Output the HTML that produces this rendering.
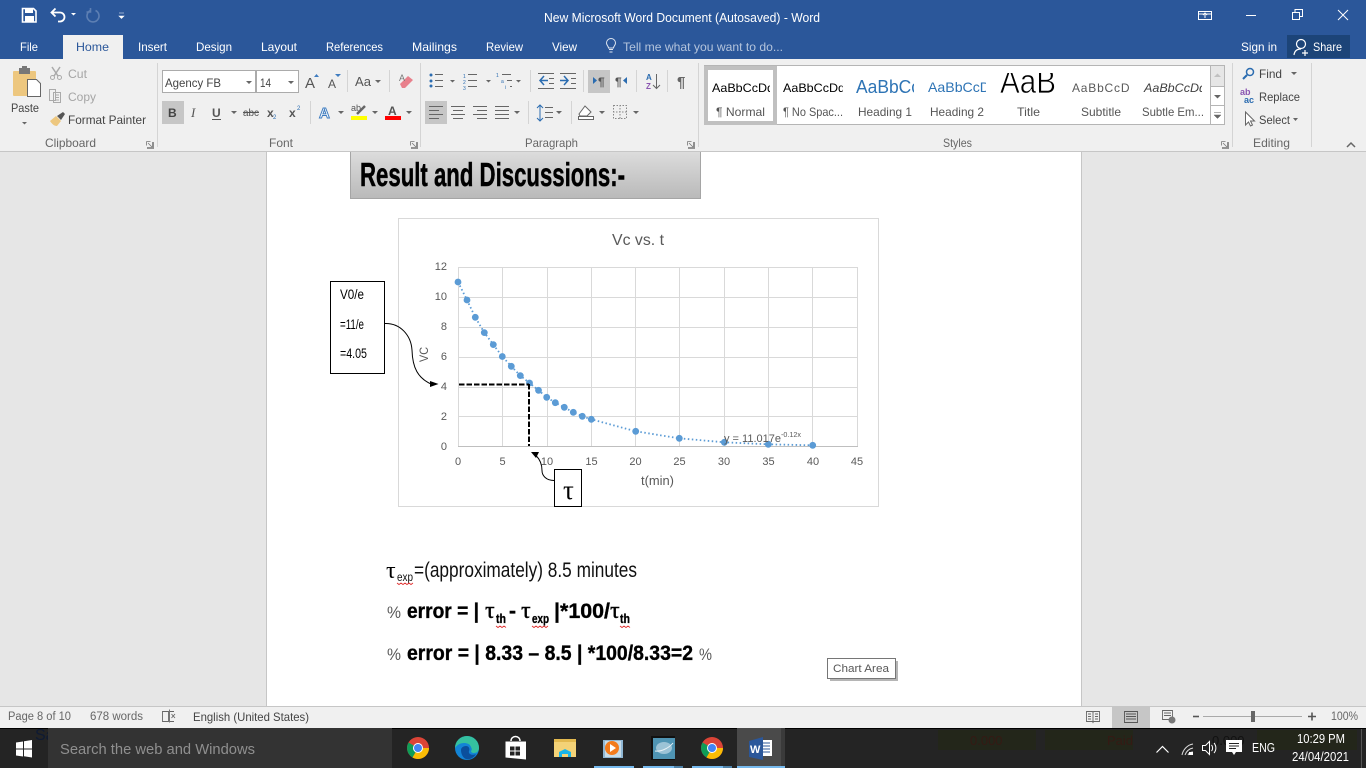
<!DOCTYPE html>
<html><head><meta charset="utf-8"><title>New Microsoft Word Document (Autosaved) - Word</title>
<style>
html,body{margin:0;padding:0;width:1366px;height:768px;overflow:hidden;background:#e6e6e6}
svg{display:block;position:absolute;left:0;top:0}
text{font-family:"Liberation Sans",sans-serif;white-space:pre}
.t{font-size:12px;fill:#fff}
.r{font-size:12px;fill:#444}
.g{font-size:12px;fill:#666}
.s{font-size:11.5px;fill:#666}
.ax{font-size:11px;fill:#595959}
.n{font-family:"Liberation Sans Narrow","Liberation Sans",sans-serif}
.b{font-family:"Liberation Sans Narrow","Liberation Sans",sans-serif;font-weight:bold;fill:#000;stroke:#000;stroke-width:.35}
.tau{font-family:"Liberation Serif",serif;font-size:24px;fill:#000}
.ic{fill:none;stroke:#666;stroke-width:1}
</style></head><body>
<svg width="1366" height="768" viewBox="0 0 1366 768" xmlns="http://www.w3.org/2000/svg">
<defs>
<linearGradient id="hg" x1="0" y1="0" x2="0" y2="1"><stop offset="0" stop-color="#dcdcdc"/><stop offset="1" stop-color="#b9b9b9"/></linearGradient>
<clipPath id="c1"><rect x="712" y="70" width="58" height="32"/></clipPath>
<clipPath id="c2"><rect x="783" y="70" width="60" height="32"/></clipPath>
<clipPath id="c3"><rect x="855" y="70" width="59" height="32"/></clipPath>
<clipPath id="c4"><rect x="927" y="70" width="59" height="32"/></clipPath>
<clipPath id="c5"><rect x="998" y="73" width="60" height="30"/></clipPath>
<clipPath id="c6"><rect x="1071" y="70" width="59" height="32"/></clipPath>
<clipPath id="c7"><rect x="1143" y="70" width="59" height="32"/></clipPath>
</defs>

<!-- document area -->
<rect x="0" y="152" width="1366" height="556" fill="#e6e6e6"/>
<rect x="266.500" y="150" width="815" height="560" fill="#fff" stroke="#c6c6c6"/>

<!-- title bar -->
<rect width="1366" height="59" fill="#2b579a"/>
<path d="M22.500 8.500h11l2.500 2.500v11h-13.500z" fill="none" stroke="#fff" stroke-width="1.600"/>
<rect x="25" y="8" width="8" height="5" fill="#fff"/><rect x="25" y="16" width="9" height="6" fill="#fff"/>
<path d="M52 12.500h8a4.500 4.500 0 0 1 0 9h-2M55.500 8.500l-4 4 4 4" fill="none" stroke="#fff" stroke-width="1.800"/>
<path d="M71 13h5l-2.500 2.500z" fill="#fff"/>
<path d="M90.500 10.500a6 6 0 1 0 5 0M90.500 8v4h-4" fill="none" stroke="#5d7fb3" stroke-width="1.600"/>
<path d="M119 13h5M119 16h5l-2.500 2.500z" fill="#fff" stroke="#fff" stroke-width=".6"/>
<text class="t" x="544" y="22" textLength="276" lengthAdjust="spacingAndGlyphs" style="font-size:12.500px">New Microsoft Word Document (Autosaved) - Word</text>
<path d="M1198.500 11.500h13v8h-13zM1198.500 14h13M1205 18v-5M1203 15l2-2 2 2" fill="none" stroke="#fff"/>
<path d="M1246 15.500h10" stroke="#fff" fill="none"/>
<path d="M1292.500 12.500h7v7h-7zM1295 12v-2.500h7.500v7h-3" stroke="#fff" fill="none"/>
<path d="M1338 10l10 10M1348 10l-10 10" stroke="#fff" fill="none"/>

<!-- tabs -->
<rect x="63" y="35" width="60" height="24" fill="#f0f0f0"/>
<text class="t" x="20" y="51" textLength="18" lengthAdjust="spacingAndGlyphs">File</text>
<text class="t" x="76" y="51" textLength="33" lengthAdjust="spacingAndGlyphs" style="fill:#2b579a">Home</text>
<text class="t" x="138" y="51" textLength="29" lengthAdjust="spacingAndGlyphs">Insert</text>
<text class="t" x="196" y="51" textLength="36" lengthAdjust="spacingAndGlyphs">Design</text>
<text class="t" x="261" y="51" textLength="36" lengthAdjust="spacingAndGlyphs">Layout</text>
<text class="t" x="326" y="51" textLength="57" lengthAdjust="spacingAndGlyphs">References</text>
<text class="t" x="412" y="51" textLength="45" lengthAdjust="spacingAndGlyphs">Mailings</text>
<text class="t" x="486" y="51" textLength="37" lengthAdjust="spacingAndGlyphs">Review</text>
<text class="t" x="552" y="51" textLength="25" lengthAdjust="spacingAndGlyphs">View</text>
<path d="M609 49.500h4M609.500 52h3M608.500 48c0-2-2-2.500-2-5a4.500 4.500 0 0 1 9 0c0 2.500-2 3-2 5z" fill="none" stroke="#dfe6f0"/>
<text class="t" x="623" y="51" textLength="160" lengthAdjust="spacingAndGlyphs" style="fill:#b4c4dc">Tell me what you want to do...</text>
<text class="t" x="1241" y="51" textLength="36" lengthAdjust="spacingAndGlyphs">Sign in</text>
<rect x="1287" y="35" width="63" height="23" fill="#1c4478"/>
<circle cx="1301" cy="44" r="4.500" fill="none" stroke="#fff" stroke-width="1.200"/>
<path d="M1294 55c.5-4 3-6 7-6M1302 53h6M1305 50v6" fill="none" stroke="#fff" stroke-width="1.200"/>
<text class="t" x="1313" y="51" textLength="29" lengthAdjust="spacingAndGlyphs">Share</text>

<!-- ribbon -->
<rect y="59" width="1366" height="92" fill="#f0f0f0"/>
<rect y="151" width="1366" height="1" fill="#c6c6c6"/>
<path d="M157.500 63v84M420.500 63v84M698.500 63v84M1232.500 63v84M1311.500 63v84" stroke="#d4d4d4" fill="none"/>

<!-- clipboard -->
<rect x="13" y="71" width="23" height="25" rx="1" fill="#edc77f"/>
<rect x="19" y="68" width="11" height="6" fill="#777"/><rect x="22" y="66" width="5" height="4" fill="#777"/>
<path d="M27.500 79.500h9l4 4v13h-13z" fill="#fff" stroke="#666"/>
<text class="r" x="11" y="112" textLength="28" lengthAdjust="spacingAndGlyphs">Paste</text>
<path d="M22 122h5l-2.500 2.500z" fill="#666"/>
<path d="M52 67l6 9M60 67l-6 9" stroke="#aaa" stroke-width="1.500" fill="none"/><circle cx="52.500" cy="77.500" r="2" fill="none" stroke="#aaa"/><circle cx="59.500" cy="77.500" r="2" fill="none" stroke="#aaa"/>
<text class="r" x="68" y="78" textLength="19" lengthAdjust="spacingAndGlyphs" style="fill:#a5a5a5">Cut</text>
<path d="M49.500 89.500h6v11h-6zM53.500 92.500h7v10h-7zM55 95h4M55 97.500h4M55 100h4" fill="#f0f0f0" stroke="#aaa"/>
<text class="r" x="68" y="101" textLength="28" lengthAdjust="spacingAndGlyphs" style="fill:#a5a5a5">Copy</text>
<path d="M50 121l6-5 5 5-4 5c-3 0-5-2-7-5z" fill="#edc77f"/><path d="M57 116l6-4 2 2-4 6z" fill="#555"/>
<text class="r" x="68" y="124" textLength="78" lengthAdjust="spacingAndGlyphs">Format Painter</text>
<text class="g" x="45" y="147" textLength="51" lengthAdjust="spacingAndGlyphs">Clipboard</text>
<path d="M146.500 141.500h4M146.500 141.500v4M153.500 148.500h-6v-1h5v-5h1zM148 143l4 4" stroke="#777" fill="none" stroke-width=".8"/>

<!-- font -->
<rect x="162.500" y="70.500" width="93" height="22" fill="#fff" stroke="#ababab"/>
<rect x="256.500" y="70.500" width="42" height="22" fill="#fff" stroke="#ababab"/>
<text class="r" x="165" y="87" textLength="56" lengthAdjust="spacingAndGlyphs">Agency FB</text>
<text class="r" x="260" y="87" textLength="11" lengthAdjust="spacingAndGlyphs">14</text>
<path d="M246 81h6l-3 3zM288 81h6l-3 3z" fill="#666"/>
<text x="305" y="88" style="font-size:15px;fill:#555">A</text><path d="M314 77h5l-2.500-3z" fill="#3e7cc0"/>
<text x="328" y="88" style="font-size:12px;fill:#555">A</text><path d="M335 74h6l-3 3z" fill="#3e7cc0"/>
<path d="M347.500 70v22M389.500 70v22" stroke="#d4d4d4"/>
<text x="355" y="86" style="font-size:13px;fill:#555" textLength="16" lengthAdjust="spacingAndGlyphs">Aa</text>
<path d="M375 80h6l-3 3z" fill="#666"/>
<path d="M400 84l8-8 5 4-8 8h-3z" fill="#e8808c"/><text x="399" y="81" style="font-size:9px;fill:#777">A</text>
<rect x="162" y="101" width="22" height="23" fill="#c6c6c6"/>
<text x="168" y="117" style="font-size:12px;font-weight:bold;fill:#444">B</text>
<text x="191" y="117" style="font-family:'Liberation Serif',serif;font-size:13px;font-style:italic;fill:#555">I</text>
<text x="212" y="117" style="font-size:12px;font-weight:bold;fill:#555">U</text><path d="M212 119.500h9" stroke="#555"/>
<path d="M231 111h6l-3 3z" fill="#666"/>
<text x="243" y="116" style="font-size:10px;fill:#555" textLength="16" lengthAdjust="spacingAndGlyphs">abc</text><path d="M243 112.500h16" stroke="#555"/>
<text x="267" y="117" style="font-size:12px;font-weight:bold;fill:#555">x</text><text x="273" y="119" style="font-size:6px;fill:#2b6cb0">2</text>
<text x="289" y="117" style="font-size:12px;font-weight:bold;fill:#555">x</text><text x="297" y="110" style="font-size:6px;fill:#2b6cb0">2</text>
<path d="M310.500 101v23" stroke="#d4d4d4"/>
<text x="319" y="118" style="font-size:15px;font-weight:bold;fill:#fff;stroke:#3e7cc0;stroke-width:1">A</text>
<path d="M338 111h6l-3 3z" fill="#666"/>
<text x="351" y="111" style="font-size:9px;fill:#555">ab</text><path d="M357 114l8-8" stroke="#666" stroke-width="2.500"/>
<rect x="351" y="116" width="16" height="4" fill="#ff0"/>
<path d="M372 111h6l-3 3z" fill="#666"/>
<text x="388" y="115" style="font-size:12px;font-weight:bold;fill:#555">A</text>
<rect x="385" y="116" width="16" height="4" fill="#f00"/>
<path d="M406 111h6l-3 3z" fill="#666"/>
<text class="g" x="269" y="147" textLength="24" lengthAdjust="spacingAndGlyphs">Font</text>
<path d="M410.500 141.500h4M410.500 141.500v4M417.500 148.500h-6v-1h5v-5h1zM412 143l4 4" stroke="#777" fill="none" stroke-width=".8"/>

<!-- paragraph -->
<g fill="#2b6cb0"><circle cx="431" cy="75" r="1.500"/><circle cx="431" cy="81" r="1.500"/><circle cx="431" cy="86" r="1.500"/></g>
<path d="M435 74.500h8M435 80.500h8M435 86.500h8" stroke="#666" fill="none"/>
<path d="M450 80h5l-2.500 2.500zM486 80h5l-2.500 2.500zM516 80h5l-2.500 2.500z" fill="#666"/>
<text x="463" y="78" style="font-size:5px;fill:#2b6cb0">1</text><text x="463" y="84" style="font-size:5px;fill:#2b6cb0">2</text><text x="463" y="90" style="font-size:5px;fill:#2b6cb0">3</text>
<path d="M468 74.500h9M468 80.500h9M468 86.500h9" stroke="#666" fill="none"/>
<text x="496" y="77" style="font-size:5px;fill:#2b6cb0">1</text><text x="501" y="83" style="font-size:5px;fill:#2b6cb0">a</text><text x="505" y="89" style="font-size:5px;fill:#2b6cb0">i</text>
<path d="M502 74.500h9M507 80.500h5M510 86.500h2" stroke="#666" fill="none"/>
<path d="M530.500 70v22M583.500 70v22M636.500 70v22M667.500 70v22M528.500 101v23M571.500 101v23" stroke="#d4d4d4"/>
<path d="M540 80.500h8M544 76l-4 4.500 4 4.500" stroke="#2b6cb0" fill="none" stroke-width="1.500"/>
<path d="M538 73.500h16M549 78.500h5M549 83.500h5M538 88.500h16" stroke="#666" fill="none"/>
<path d="M560 80.500h8M564 76l4 4.500-4 4.500" stroke="#2b6cb0" fill="none" stroke-width="1.500"/>
<path d="M560 73.500h16M571 78.500h5M571 83.500h5M560 88.500h16" stroke="#666" fill="none"/>
<rect x="588" y="70" width="22" height="23" fill="#c6c6c6"/>
<path d="M593 77v7l4-3.500z" fill="#2b6cb0"/><text x="598" y="86" style="font-size:12px;font-weight:bold;fill:#555">¶</text>
<text x="615" y="86" style="font-size:12px;font-weight:bold;fill:#555">¶</text><path d="M627 77v7l-4-3.500z" fill="#2b6cb0"/>
<text x="646" y="80" style="font-size:8px;font-weight:bold;fill:#2b6cb0">A</text><text x="646" y="89" style="font-size:8px;font-weight:bold;fill:#8a55b0">Z</text>
<path d="M656.500 74v14M653 85l3.500 3.500 3.500-3.500" stroke="#666" fill="none"/>
<text x="677" y="87" style="font-size:15px;font-weight:bold;fill:#666">¶</text>
<rect x="425" y="101" width="22" height="23" fill="#c6c6c6"/>
<path d="M429 106.500h14M429 110.500h10M429 114.500h14M429 118.500h10" stroke="#666" fill="none"/>
<path d="M451 106.500h14M453 110.500h10M451 114.500h14M453 118.500h10" stroke="#666" fill="none"/>
<path d="M473 106.500h14M477 110.500h10M473 114.500h14M477 118.500h10" stroke="#666" fill="none"/>
<path d="M495 106.500h14M495 110.500h14M495 114.500h14M495 118.500h14" stroke="#666" fill="none"/>
<path d="M514 111h6l-3 3z" fill="#666"/>
<path d="M540 105v16M537 108l3-3 3 3M537 118l3 3 3-3" stroke="#2b6cb0" fill="none"/>
<path d="M545 107.500h8M545 112.500h8M545 117.500h8" stroke="#666" fill="none"/>
<path d="M556 111h6l-3 3z" fill="#666"/>
<path d="M579 114l6-8 6 6-4 4h-7zM578.500 116.500h15v3h-15z" fill="#fff" stroke="#666"/>
<path d="M599 111h6l-3 3z" fill="#666"/>
<path d="M613.500 105.500h13v13h-13zM620 105v14M613 112h14" stroke="#888" fill="none" stroke-dasharray="1.500 1.500"/>
<path d="M633 111h6l-3 3z" fill="#666"/>
<text class="g" x="525" y="147" textLength="53" lengthAdjust="spacingAndGlyphs">Paragraph</text>
<path d="M687.500 141.500h4M687.500 141.500v4M694.500 148.500h-6v-1h5v-5h1zM689 143l4 4" stroke="#777" fill="none" stroke-width=".8"/>

<!-- styles -->
<rect x="704.500" y="65.500" width="520" height="59" fill="#fff" stroke="#b5b5b5"/>
<rect x="706" y="68" width="69" height="55" fill="#fff" stroke="#c0c0c0" stroke-width="4"/>
<path d="M1210.500 65.500v59M1210.500 86.500h14M1210.500 105.500h14" stroke="#b5b5b5" fill="none"/>
<rect x="1211" y="66" width="13" height="20" fill="#e6e6e6"/>
<path d="M1214 77h7l-3.500-3.500z" fill="#c0c0c0"/>
<path d="M1214 95h7l-3.500 3.500z" fill="#666"/>
<path d="M1214 112.500h7M1214 115h7l-3.500 3.500z" fill="#666" stroke="#666" stroke-width=".5"/>
<g clip-path="url(#c1)"><text x="712" y="92" style="font-size:12px;fill:#000" textLength="62" lengthAdjust="spacingAndGlyphs">AaBbCcDd</text></g>
<g clip-path="url(#c2)"><text x="783" y="92" style="font-size:12px;fill:#000" textLength="62" lengthAdjust="spacingAndGlyphs">AaBbCcDd</text></g>
<g clip-path="url(#c3)"><text x="856" y="93" style="font-size:18px;fill:#2e74b5" textLength="64" lengthAdjust="spacingAndGlyphs">AaBbCc</text></g>
<g clip-path="url(#c4)"><text x="928" y="92" style="font-size:14px;fill:#2e74b5" textLength="62" lengthAdjust="spacingAndGlyphs">AaBbCcD</text></g>
<g clip-path="url(#c5)"><text x="1000" y="93" style="font-size:34px;fill:#000;stroke:#fff;stroke-width:.7" textLength="56" lengthAdjust="spacingAndGlyphs">AaB</text></g>
<g clip-path="url(#c6)"><text x="1072" y="92" style="font-size:12px;fill:#5a5a5a;letter-spacing:.8px">AaBbCcD</text></g>
<g clip-path="url(#c7)"><text x="1144" y="92" style="font-size:12px;font-style:italic;fill:#404040" textLength="62" lengthAdjust="spacingAndGlyphs">AaBbCcDd</text></g>
<g class="r" style="font-size:12px;fill:#555">
<text x="716" y="116" textLength="49" lengthAdjust="spacingAndGlyphs">¶ Normal</text>
<text x="783" y="116" textLength="60" lengthAdjust="spacingAndGlyphs">¶ No Spac...</text>
<text x="858" y="116" textLength="54" lengthAdjust="spacingAndGlyphs">Heading 1</text>
<text x="930" y="116" textLength="54" lengthAdjust="spacingAndGlyphs">Heading 2</text>
<text x="1017" y="116" textLength="23" lengthAdjust="spacingAndGlyphs">Title</text>
<text x="1081" y="116" textLength="40" lengthAdjust="spacingAndGlyphs">Subtitle</text>
<text x="1142" y="116" textLength="62" lengthAdjust="spacingAndGlyphs">Subtle Em...</text>
</g>
<text class="g" x="943" y="147" textLength="29" lengthAdjust="spacingAndGlyphs">Styles</text>
<path d="M1221.500 141.500h4M1221.500 141.500v4M1228.500 148.500h-6v-1h5v-5h1zM1223 143l4 4" stroke="#777" fill="none" stroke-width=".8"/>

<!-- editing -->
<circle cx="1250" cy="72" r="3.500" fill="none" stroke="#2b6cb0" stroke-width="1.500"/><path d="M1247 75l-4 4" stroke="#2b6cb0" stroke-width="2"/>
<text class="r" x="1259" y="78" textLength="23" lengthAdjust="spacingAndGlyphs">Find</text>
<path d="M1291 72h6l-3 3z" fill="#666"/>
<text x="1240" y="95" style="font-size:9px;font-weight:bold;fill:#8a55b0">ab</text>
<text x="1244" y="103" style="font-size:9px;font-weight:bold;fill:#2b6cb0">ac</text>
<text class="r" x="1259" y="101" textLength="41" lengthAdjust="spacingAndGlyphs">Replace</text>
<path d="M1245.500 112v13l3-3 2 4 2-1-2-4h4z" fill="#fff" stroke="#666"/>
<text class="r" x="1259" y="124" textLength="31" lengthAdjust="spacingAndGlyphs">Select</text>
<path d="M1293 118h5l-2.500 3z" fill="#666"/>
<text class="g" x="1253" y="147" textLength="37" lengthAdjust="spacingAndGlyphs">Editing</text>
<path d="M1347 147l4-4 4 4" stroke="#666" fill="none" stroke-width="1.500"/>

<!-- heading -->
<rect x="350" y="152" width="351" height="47" fill="url(#hg)"/>
<path d="M350.500 152v46.500h350V152" fill="none" stroke="#a5a5a5"/>
<text class="b" x="360" y="186" style="font-size:33px;stroke-width:.5" textLength="265" lengthAdjust="spacingAndGlyphs">Result and Discussions:-</text>

<!-- chart -->
<rect x="398.500" y="218.500" width="480" height="288" fill="#fff" stroke="#d9d9d9"/>
<path d="M458.500 267v179M502.500 267v179M547.500 267v179M591.500 267v179M635.500 267v179M679.500 267v179M724.500 267v179M768.500 267v179M812.500 267v179M857.500 267v179M458 267.500h400M458 297.500h400M458 327.500h400M458 357.500h400M458 387.500h400M458 416.500h400" stroke="#d9d9d9" fill="none"/>
<path d="M458 446.500h400" stroke="#bfbfbf" fill="none"/>
<text x="612" y="245" style="font-size:16px;fill:#595959" textLength="52" lengthAdjust="spacingAndGlyphs">Vc vs. t</text>
<g class="ax" text-anchor="end">
<text x="447" y="270">12</text><text x="447" y="300">10</text><text x="447" y="330">8</text><text x="447" y="360">6</text><text x="447" y="390">4</text><text x="447" y="420">2</text><text x="447" y="450">0</text>
</g>
<g class="ax" text-anchor="middle">
<text x="458" y="465">0</text><text x="502.500" y="465">5</text><text x="547" y="465">10</text><text x="591.500" y="465">15</text><text x="635.500" y="465">20</text><text x="679.500" y="465">25</text><text x="724" y="465">30</text><text x="768.500" y="465">35</text><text x="813" y="465">40</text><text x="857" y="465">45</text>
</g>
<text class="ax" x="641" y="485" textLength="33" lengthAdjust="spacingAndGlyphs" style="font-size:12.500px">t(min)</text>
<text class="ax" transform="translate(428 362) rotate(-90)" textLength="15" lengthAdjust="spacingAndGlyphs" style="font-size:12px">VC</text>
<polyline fill="none" stroke="#5b9bd5" stroke-width="1.800" stroke-dasharray="1.500 2.500" points="458,282 467,300 475.300,317.300 484.300,332.600 493.300,344.600 502.300,356.500 511.300,366.300 520.300,375.600 529.500,383 538.500,390.300 546.700,397.300 555.300,402.700 564.300,407.300 573.300,412.300 582.300,416.300 591.300,419.300 635.700,431.300 679.300,438.300 724.300,442.300 768.300,444.300 812.700,445.300"/>
<g fill="#5b9bd5">
<circle cx="458" cy="282" r="3.400"/><circle cx="467" cy="300" r="3.400"/><circle cx="475.300" cy="317.300" r="3.400"/><circle cx="484.300" cy="332.600" r="3.400"/><circle cx="493.300" cy="344.600" r="3.400"/><circle cx="502.300" cy="356.500" r="3.400"/><circle cx="511.300" cy="366.300" r="3.400"/><circle cx="520.300" cy="375.600" r="3.400"/><circle cx="529.500" cy="383" r="3.400"/><circle cx="538.500" cy="390.300" r="3.400"/><circle cx="546.700" cy="397.300" r="3.400"/><circle cx="555.300" cy="402.700" r="3.400"/><circle cx="564.300" cy="407.300" r="3.400"/><circle cx="573.300" cy="412.300" r="3.400"/><circle cx="582.300" cy="416.300" r="3.400"/><circle cx="591.300" cy="419.300" r="3.400"/><circle cx="635.700" cy="431.300" r="3.400"/><circle cx="679.300" cy="438.300" r="3.400"/><circle cx="724.300" cy="442.300" r="3.400"/><circle cx="768.300" cy="444.300" r="3.400"/><circle cx="812.700" cy="445.300" r="3.400"/>
</g>
<text x="724" y="442" style="font-size:11px;fill:#595959" textLength="57" lengthAdjust="spacingAndGlyphs">y = 11.017e</text>
<text x="781" y="437" style="font-size:7px;fill:#595959" textLength="20" lengthAdjust="spacingAndGlyphs">-0.12x</text>
<path d="M459 384.500h70" stroke="#000" stroke-width="2" stroke-dasharray="5.500 2" fill="none"/>
<path d="M529 384v62" stroke="#000" stroke-width="2" stroke-dasharray="5.500 2" fill="none"/>
<path d="M385 323.500C400 323 411 335 412 350C412.500 368 418 378 431 384" stroke="#000" fill="none"/>
<path d="M430 381l8.500 3-8.500 3z" fill="#000"/>
<path d="M554 480.500c-8 0-12-5-12-10c0-6-2-11-6-15" stroke="#000" fill="none"/>
<path d="M531 452h8l-3 6z" fill="#000"/>
<rect x="330.500" y="281.500" width="54" height="92" fill="#fff" stroke="#000"/>
<text class="n" x="340" y="299" style="font-size:14px;fill:#000" textLength="24" lengthAdjust="spacingAndGlyphs">V0/e</text>
<text class="n" x="340" y="329" style="font-size:14px;fill:#000" textLength="24" lengthAdjust="spacingAndGlyphs">=11/e</text>
<text class="n" x="340" y="358" style="font-size:14px;fill:#000" textLength="27" lengthAdjust="spacingAndGlyphs">=4.05</text>
<rect x="554.500" y="469.500" width="27" height="37" fill="#fff" stroke="#000"/>
<text x="563" y="499" style="font-family:'Liberation Serif',serif;font-size:27px;fill:#000">τ</text>

<!-- body text -->
<text class="tau" x="386" y="578">τ</text>
<text class="n" x="397" y="581" style="font-size:12px;fill:#111" textLength="16" lengthAdjust="spacingAndGlyphs">exp</text>
<text class="n" x="414" y="577" style="font-size:21px;fill:#111" textLength="223" lengthAdjust="spacingAndGlyphs">=(approximately) 8.5 minutes</text>
<path d="M397 583l2 1.500 2-1.500 2 1.500 2-1.500 2 1.500 2-1.500 2 1.500 2-1.500" stroke="#e03030" fill="none" stroke-width=".9"/>

<text x="387" y="618" style="font-size:17px;fill:#595959" textLength="14" lengthAdjust="spacingAndGlyphs">%</text>
<text class="b" x="407" y="618" style="font-size:21px" textLength="72" lengthAdjust="spacingAndGlyphs">error = |</text>
<text class="tau" x="485" y="618" style="stroke:#000;stroke-width:.4">τ</text>
<text class="b" x="496" y="623" style="font-size:13px" textLength="10" lengthAdjust="spacingAndGlyphs">th</text>
<text class="b" x="509" y="618" style="font-size:21px">-</text>
<text class="tau" x="521" y="618" style="stroke:#000;stroke-width:.4">τ</text>
<text class="b" x="532" y="623" style="font-size:13px" textLength="17" lengthAdjust="spacingAndGlyphs">exp</text>
<text class="b" x="554" y="618" style="font-size:21px" textLength="56" lengthAdjust="spacingAndGlyphs">|*100/</text>
<text class="tau" x="610" y="618" style="stroke:#000;stroke-width:.4">τ</text>
<text class="b" x="620" y="623" style="font-size:13px" textLength="10" lengthAdjust="spacingAndGlyphs">th</text>
<path d="M496 626l2 1.500 2-1.500 2 1.500 2-1.500 2 1.500M532 626l2 1.500 2-1.500 2 1.500 2-1.500 2 1.500 2-1.500 2 1.500 2-1.500M620 626l2 1.500 2-1.500 2 1.500 2-1.500 2 1.500" stroke="#e03030" fill="none" stroke-width=".9"/>

<text x="387" y="660" style="font-size:17px;fill:#595959" textLength="14" lengthAdjust="spacingAndGlyphs">%</text>
<text class="b" x="407" y="660" style="font-size:21px" textLength="286" lengthAdjust="spacingAndGlyphs">error = | 8.33 – 8.5 | *100/8.33=2</text>
<text x="699" y="660" style="font-size:17px;fill:#595959" textLength="13" lengthAdjust="spacingAndGlyphs">%</text>

<!-- tooltip -->
<rect x="830" y="661" width="68" height="20" fill="#b5b5b5"/>
<rect x="827.500" y="658.500" width="68" height="20" fill="#fff" stroke="#767676"/>
<text x="833" y="672" style="font-size:11px;fill:#575757" textLength="56" lengthAdjust="spacingAndGlyphs">Chart Area</text>

<!-- status bar -->
<rect y="707" width="1366" height="21" fill="#f0f0f0"/>
<rect y="706" width="1366" height="1" fill="#c6c6c6"/>
<text class="s" x="8" y="720" textLength="63" lengthAdjust="spacingAndGlyphs">Page 8 of 10</text>
<text class="s" x="90" y="720" textLength="53" lengthAdjust="spacingAndGlyphs">678 words</text>
<path d="M162.500 711.500h6v10h-6zM169.500 709.500v13M170 711.500h4M170 721.500h4M171.500 714l3.500 4M175 714l-3.500 4" stroke="#666" fill="none" stroke-width=".9"/>
<text class="s" x="193" y="721" textLength="116" lengthAdjust="spacingAndGlyphs" style="font-size:12px;fill:#444">English (United States)</text>
<path d="M1086.500 711.500h6l.5 1 .5-1h6v10h-6l-.5 1-.5-1h-6zM1093 712v10M1088 714h3M1088 716.500h3M1088 719h3M1095 714h3M1095 716.500h3M1095 719h3" stroke="#666" fill="none" stroke-width=".9"/>
<rect x="1112" y="707" width="38" height="21" fill="#c6c6c6"/>
<path d="M1124.500 711.500h13v11h-13zM1126 714h10M1126 716.500h10M1126 719h10" stroke="#555" fill="none" stroke-width=".9"/>
<path d="M1162.500 710.500h10v9h-10zM1164 713h7M1164 715.500h7" stroke="#666" fill="none" stroke-width=".9"/>
<circle cx="1172" cy="720" r="3.500" fill="#777"/>
<path d="M1193 716.500h6" stroke="#555" stroke-width="1.600"/>
<path d="M1203 716.500h99" stroke="#aaa"/>
<rect x="1251" y="711" width="4" height="11" fill="#666"/>
<path d="M1308 716.500h8M1312 712.500v8" stroke="#555" stroke-width="1.600"/>
<text class="s" x="1331" y="720" textLength="27" lengthAdjust="spacingAndGlyphs">100%</text>

<!-- taskbar -->
<rect y="728" width="1366" height="40" fill="#242424"/>
<rect y="728" width="1366" height="1" fill="#000"/>
<text x="35" y="740" style="font-size:16px;fill:#0e1a33">Sa</text>
<rect x="938" y="730" width="98" height="20" fill="#23261a"/>
<rect x="1045" y="730" width="88" height="20" fill="#23261a"/>
<rect x="1257" y="730" width="100" height="20" fill="#23261a"/>
<text x="970" y="745" style="font-size:13px;fill:#351a14">0.000</text>
<text x="1107" y="745" style="font-size:13px;fill:#351a14">Paid</text>
<text x="1212" y="745" style="font-size:13px;fill:#111">0.000</text>
<path d="M16 742.500l7-1v7h-7zM24 741.300l8-1.300v8.500h-8zM16 749.500h7v7l-7-1zM24 749.500h8v8l-8-1.200z" fill="#fff"/>
<rect x="48" y="728" width="344" height="40" fill="#333"/>
<text x="60" y="754" style="font-size:15px;fill:#8f8f8f" textLength="195" lengthAdjust="spacingAndGlyphs">Search the web and Windows</text>

<g id="chrome1">
<circle cx="418" cy="748" r="11" fill="#db4437"/>
<path d="M418 748l-5.500 9.500a11 11 0 0 1-4-15z" fill="#0f9d58"/>
<path d="M418 748h11a11 11 0 0 1-16.500 9.500z" fill="#fbbc05"/>
<circle cx="418" cy="748" r="5" fill="#fff"/><circle cx="418" cy="748" r="4" fill="#4285f4"/>
</g>
<g>
<circle cx="712" cy="748" r="11" fill="#db4437"/>
<path d="M712 748l-5.500 9.500a11 11 0 0 1-4-15z" fill="#0f9d58"/>
<path d="M712 748h11a11 11 0 0 1-16.500 9.500z" fill="#fbbc05"/>
<circle cx="712" cy="748" r="5" fill="#fff"/><circle cx="712" cy="748" r="4" fill="#4285f4"/>
</g>
<!-- edge -->
<circle cx="467" cy="748" r="12" fill="#1384d6"/>
<path d="M455 748a12 12 0 0 1 24 0c0 3-2 5-5 5c-2 0-3-1-3-2c1-1 1-2 0-4c-1-3-4-4-7-4c-4 0-7 2-9 5z" fill="#35c1a0"/>
<path d="M461 750c0-2 2-4 5-4c3 0 4 3 3 5c-1 3 3 5 7 3c-2 4-7 6-10 5c-3-1-5-5-5-9z" fill="#0b4f9c"/>
<!-- store -->
<path d="M505.500 741.500h20.500l0 18-20.500-2z" fill="#fff"/>
<path d="M511 741c0-6 9-6 9 0" fill="none" stroke="#fff" stroke-width="1.500"/>
<path d="M510 746.500h4.500v4h-4.500zM515.500 746.500h4.500v4h-4.500zM510 751.500h4.500v4h-4.500zM515.500 751.500h4.500v4h-4.500z" fill="#222"/>
<!-- explorer -->
<path d="M554 739h8l2 2h12v16h-22z" fill="#f3d277"/>
<rect x="554" y="739" width="22" height="3" fill="#e3b94f"/>
<path d="M559 757v-5l6-3 6 3v5h-3v-3h-6v3z" fill="#19b4e8"/>
<!-- media -->
<rect x="603" y="740" width="20" height="18" fill="#8fb6d3"/>
<rect x="605" y="741" width="16" height="16" fill="#c9dce8"/>
<circle cx="612" cy="748" r="7" fill="#f37b1d"/>
<path d="M610 744v8l6-4z" fill="#fff"/>
<!-- globe app -->
<rect x="651" y="736" width="24" height="24" fill="#111"/>
<rect x="653" y="738" width="22" height="21" fill="#4f94b3"/>
<ellipse cx="664" cy="748" rx="8" ry="6" fill="#9cc3d6"/>
<path d="M655 751c6 1 14-3 18-8" stroke="#e8f2f6" fill="none"/>
<!-- word -->
<rect x="737" y="728" width="44" height="40" fill="#4a4a4a"/>
<rect x="781" y="728" width="4" height="40" fill="#3a3a3a"/>
<rect x="760" y="740" width="12" height="16" fill="#fff"/>
<path d="M762 743h8M762 746h8M762 749h8M762 752h8" stroke="#2b579a"/>
<path d="M749 741l14-4v23l-14-3z" fill="#2b579a"/>
<text x="750" y="753" style="font-size:11px;font-weight:bold;fill:#fff">W</text>
<rect x="594" y="766" width="40" height="2" fill="#76b9ed"/>
<rect x="643" y="766" width="40" height="2" fill="#76b9ed"/>
<rect x="692" y="766" width="40" height="2" fill="#76b9ed"/>
<rect x="737" y="766" width="48" height="2" fill="#76b9ed"/>
<rect x="674" y="766" width="9" height="2" fill="#4f82a8"/><rect x="723" y="766" width="9" height="2" fill="#4f82a8"/>

<!-- tray -->
<path d="M1156.500 752.500l6-6 6 6" stroke="#fff" fill="none" stroke-width="1.200"/>
<path d="M1182 755c1-5 5-10 11-11M1185 755c1-3 3-6 8-7M1188 755c.5-1 2-3 5-3" stroke="#ddd" fill="none"/>
<rect x="1189" y="752" width="4" height="3" fill="#fff"/>
<path d="M1202.500 745.500h3l4-4v13l-4-4h-3z" stroke="#fff" fill="none"/>
<path d="M1211.500 745c1.500 1.500 1.500 4.500 0 6M1214 743c2.500 3 2.500 7 0 10" stroke="#fff" fill="none"/>
<path d="M1226 740h16v12h-6l-2 3-2-3h-6z" fill="#fff"/>
<path d="M1229 743.500h10M1229 746h10M1229 748.500h7" stroke="#242424"/>
<text x="1252" y="752" style="font-size:12.500px;fill:#fff" textLength="23" lengthAdjust="spacingAndGlyphs">ENG</text>
<text x="1297" y="743" style="font-size:12.500px;fill:#fff" textLength="48" lengthAdjust="spacingAndGlyphs">10:29 PM</text>
<text x="1292" y="761" style="font-size:12.500px;fill:#fff" textLength="57" lengthAdjust="spacingAndGlyphs">24/04/2021</text>
<rect x="1361" y="729" width="1" height="39" fill="#555"/>
</svg>
</body></html>
